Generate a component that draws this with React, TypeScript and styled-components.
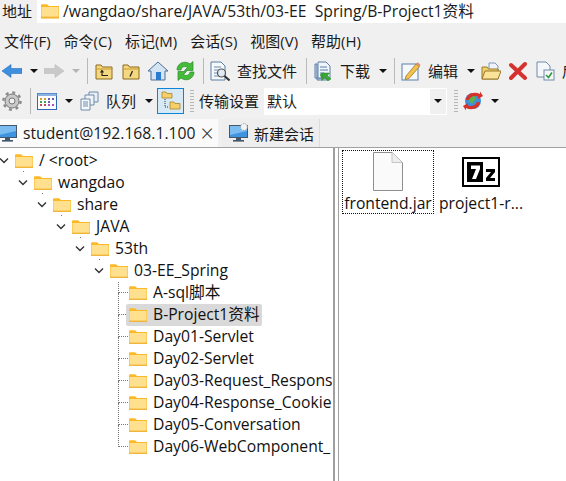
import { ReactNode } from 'react'
import styled, { createGlobalStyle } from 'styled-components'

const GlobalStyle = createGlobalStyle`
	html, body {
		margin: 0;
		padding: 0;
		background: #f0f0f0;
	}
	body {
		width: 566px;
		height: 481px;
		overflow: hidden;
		font-family: "Open Sans", "Noto Sans CJK SC", sans-serif;
		font-size: 15px;
		color: #1a1a1a;
	}
`

const Window = styled.div`
	width: 566px;
	height: 481px;
	display: flex;
	flex-direction: column;
	overflow: hidden;
	background: #f0f0f0;
`

const AddressBar = styled.div`
	height: 23px;
	flex: none;
	display: flex;
	align-items: center;
`
const AddressLabel = styled.div`
	width: 37px;
	padding: 0 0 3px 2px;
	box-sizing: border-box;
	flex: none;
`
const AddressInput = styled.div`
	flex: 1;
	height: 23px;
	background: #fff;
	display: flex;
	align-items: center;
	gap: 4px;
	padding-left: 4px;
	white-space: pre;
	font-size: 15.7px;
`
const AddressText = styled.span`
	padding-bottom: 3px;
`

const MenuBar = styled.div`
	height: 32px;
	flex: none;
	display: flex;
	align-items: center;
	gap: 13px;
	padding-left: 4px;
	margin-top: 1px;
`
const MenuItem = styled.span`
	white-space: nowrap;
`

const Toolbar = styled.div<{ $h: number }>`
	height: ${p => p.$h}px;
	flex: none;
	display: flex;
	align-items: center;
	white-space: nowrap;
`
const Slot = styled.div<{ $w: number; $ml?: number }>`
	width: ${p => p.$w}px;
	margin-left: ${p => p.$ml ?? 0}px;
	flex: none;
	display: flex;
	align-items: center;
	justify-content: center;
`
const Label = styled.span<{ $ml: number }>`
	margin-left: ${p => p.$ml}px;
	padding-bottom: 2px;
	flex: none;
`
const Separator = styled.div<{ $ml: number }>`
	width: 1px;
	height: 26px;
	margin-left: ${p => p.$ml}px;
	background: #b9b9b9;
	flex: none;
`
const Caret = styled.div<{ $ml: number; $muted?: boolean }>`
	margin-left: ${p => p.$ml}px;
	flex: none;
	width: 0;
	height: 0;
	border-left: 4px solid transparent;
	border-right: 4px solid transparent;
	border-top: 4px solid ${p => (p.$muted ? '#b5b5b5' : '#111')};
`
const Grip = styled.div<{ $ml: number }>`
	width: 4px;
	height: 22px;
	margin-left: ${p => p.$ml}px;
	flex: none;
	background: repeating-linear-gradient(to bottom, #b5b5b5 0 1px, #f0f0f0 1px 3px);
`
const ToggleButton = styled.div`
	width: 27px;
	height: 26px;
	margin-left: 4px;
	box-sizing: border-box;
	border: 1px solid #0a84d8;
	background: #d8e9f6;
	display: flex;
	align-items: center;
	justify-content: center;
	flex: none;
`
const Combo = styled.div`
	width: 183px;
	height: 27px;
	margin-left: 5px;
	flex: none;
	background: #fff;
	display: flex;
	align-items: center;
	padding-left: 3px;
	box-sizing: border-box;
`
const ComboText = styled.span`
	flex: 1;
	padding-bottom: 2px;
`
const ComboArrow = styled.div`
	width: 16px;
	height: 25px;
	background: #f0f0f0;
	display: flex;
	align-items: center;
	justify-content: center;
	margin-right: 1px;
`

const TabStrip = styled.div`
	height: 28px;
	margin-top: 3px;
	flex: none;
	display: flex;
	align-items: stretch;
	border-bottom: 1px solid #a0a0a0;
`
const Tab = styled.div<{ $active?: boolean; $w: number }>`
	width: ${p => p.$w}px;
	margin-left: ${p => (p.$active ? 0 : 4)}px;
	box-sizing: border-box;
	background: ${p => (p.$active ? '#fafafa' : '#eeeeee')};
	border-right: ${p => (p.$active ? 'none' : '1px solid #dcdcdc')};
	display: flex;
	align-items: center;
	white-space: nowrap;
	flex: none;
`
const TabTitle = styled.span<{ $ml: number; $wide?: boolean }>`
	margin-left: ${p => p.$ml}px;
	font-size: ${p => (p.$wide ? 15.7 : 15)}px;
	flex: none;
`
const TabClose = styled.span`
	margin-left: 5px;
	font-size: 23px;
	font-weight: 300;
	line-height: 1;
	color: #333;
`

const Panes = styled.div`
	flex: 1;
	display: flex;
	min-height: 0;
	background: #fff;
`
const TreePane = styled.div`
	width: 333px;
	flex: none;
	overflow: hidden;
	padding-top: 2px;
	background: #fff;
	font-size: 15.7px;
`
const Splitter = styled.div`
	width: 6px;
	flex: none;
	box-sizing: border-box;
	background: #fff;
	border-left: 2px solid #a0a0a0;
	border-right: 1px solid #a0a0a0;
`
const FilePane = styled.div`
	flex: 1;
	display: flex;
	align-items: flex-start;
	padding: 2px 0 0 3px;
	font-size: 15.7px;
`

const TreeRow = styled.div<{ $depth: number }>`
	position: relative;
	height: 22px;
	display: flex;
	align-items: center;
	padding-left: ${p => p.$depth * 19 + 15}px;
	white-space: nowrap;
	color: #111;
`
const Chevron = styled.svg<{ $depth: number }>`
	position: absolute;
	left: ${p => p.$depth * 19 - 1}px;
	top: 7px;
`
const TreeDot = styled.i<{ $depth: number }>`
	position: absolute;
	left: ${p => p.$depth * 19 + 23}px;
	bottom: 0;
	width: 1px;
	height: 1px;
	background: #777;
`
const TreeLeafLine = styled.div<{ $first?: boolean }>`
	position: absolute;
	left: 118px;
	top: ${p => (p.$first ? 0 : -11)}px;
	width: 10px;
	height: ${p => (p.$first ? 11 : 22)}px;
	box-sizing: border-box;
	border-left: 1px dotted #777;
	border-bottom: 1px dotted #777;
`
const TreeLabel = styled.div<{ $selected?: boolean }>`
	position: relative;
	display: flex;
	align-items: center;
	gap: 6px;
	height: 22px;
	padding: 0 2px 0 0;
	border-radius: 2px;
	background: ${p => (p.$selected ? '#d9d9d9' : 'transparent')};
	box-shadow: ${p => (p.$selected ? '-3px 0 0 #d9d9d9' : 'none')};
`
const TreeText = styled.span`
	padding-bottom: 3px;
`

const FileItem = styled.div<{ $focused?: boolean; $w: number; $ml?: number }>`
	width: ${p => p.$w}px;
	margin-left: ${p => p.$ml ?? 0}px;
	height: 64px;
	box-sizing: border-box;
	border: 1px dotted ${p => (p.$focused ? '#111' : 'transparent')};
	display: flex;
	flex-direction: column;
	align-items: center;
	white-space: nowrap;
	flex: none;
	color: #111;
`
const FileIconBox = styled.div`
	height: 41px;
	display: flex;
	align-items: center;
	justify-content: center;
	flex: none;
`

const FolderSvg = styled.svg`
	flex: none;
`
const Folder = ({ w = 18 }: { w?: number }) => (
	<FolderSvg width={w} height={w * 0.8} viewBox='0 0 18 14.4'>
		<path d='M0 1.2 Q0 .2 1 .2 H6 L8 2 H18 V14.4 H0 Z' fill='#fbb928' />
		<rect x='.5' y='3' width='17' height='10.4' fill='#ffe08e' />
		<rect x='0' y='12.6' width='18' height='1.6' fill='#f1b53a' />
	</FolderSvg>
)

const Ico = ({ w = 20, children }: { w?: number; children: ReactNode }) => (
	<svg width={w} height={20} viewBox={`0 0 ${w} 20`}>
		{children}
	</svg>
)

const ArrowIcon = ({ gray }: { gray?: boolean }) => (
	<Ico>
		<path
			d={gray ? 'M0 7.5 H11 V3.5 L20 10 L11 16.5 V12.5 H0 Z' : 'M20 7.5 H9 V3.5 L0 10 L9 16.5 V12.5 H20 Z'}
			fill={gray ? '#c9c9c9' : '#3f8fe0'}
			stroke={gray ? '#bdbdbd' : '#2a6fc0'}
			strokeWidth='.6'
		/>
	</Ico>
)
const FolderAction = ({ kind }: { kind: 'up' | 'slash' }) => (
	<Ico w={18}>
		<path d='M1 4 H6 L7.5 6 H17 V18 H1 Z' fill='#f4d77e' stroke='#8c6a1c' />
		<path d='M1 8 H17' stroke='#c89c30' />
		{kind === 'up' ? (
			<path d='M7 10 V14.5 H13 M5.5 11.5 L7 9.5 L8.5 11.5' fill='none' stroke='#222' strokeWidth='1.1' />
		) : (
			<path d='M10.5 10 L8 15.5' stroke='#222' strokeWidth='1.3' />
		)}
	</Ico>
)
const HomeIcon = () => (
	<Ico>
		<path d='M10 1 L20 10 H17 V19 H3 V10 H0 Z' fill='#d5e4f3' stroke='#4b6f94' />
		<rect x='8' y='11' width='5' height='8' fill='#2d7bd0' />
	</Ico>
)
const RefreshIcon = () => (
	<Ico w={19}>
		<path d='M1 9 C1 2 9 -1 14 3 L17 0.5 V9.5 H8.5 L11.5 6.5 C8.5 4.5 5.5 6 5 9 Z' fill='#45bb3a' stroke='#2b8a2a' strokeWidth='.7' />
		<path d='M18 11 C18 18 10 21 5 17 L2 19.5 V10.5 H10.5 L7.5 13.5 C10.5 15.5 13.5 14 14 11 Z' fill='#45bb3a' stroke='#2b8a2a' strokeWidth='.7' />
	</Ico>
)
const FindIcon = () => (
	<Ico>
		<path d='M1 1 H11 L15 5 V19 H1 Z' fill='#f6f9fc' stroke='#5b7fa6' />
		<path d='M4 6 H11 M4 9 H12 M4 12 H10 M4 15 H9' stroke='#6c87a8' strokeWidth='1' />
		<circle cx='11.5' cy='12' r='4' fill='#dfeaf5' stroke='#555' strokeWidth='1.2' />
		<path d='M14.5 15 L19.5 19.5' stroke='#333' strokeWidth='2' />
	</Ico>
)
const DownloadIcon = () => (
	<Ico w={18}>
		<path d='M1 3 H3 V19 H14 V17 H1 Z' fill='#c7d6e8' stroke='#5b7fa6' />
		<path d='M4 1 H12 L16 5 V17 H4 Z' fill='#f1f6fb' stroke='#5b7fa6' />
		<path d='M6 6 H13 M6 9 H14 M6 12 H10' stroke='#5b7fa6' />
		<path d='M8 19.5 L8 12 L6 14 M8 12 H15.5 L13.5 14.5 L17 18 L14 20 L10.5 16.5 L8 19.5' fill='#3ba53a' stroke='#2c8a2c' strokeWidth='.5' />
	</Ico>
)
const EditIcon = () => (
	<Ico>
		<rect x='1' y='3' width='16' height='16' fill='#f4f8fc' stroke='#5b7fa6' />
		<path d='M5 15 L15 3 L18.5 5.5 L8 17.5 L4 18.5 Z' fill='#f2c14f' stroke='#9a7a28' strokeWidth='.8' />
		<path d='M15 3 L16.5 1.2 L19.6 3.8 L18.5 5.5 Z' fill='#e88b73' />
	</Ico>
)
const OpenFolderIcon = () => (
	<Ico>
		<path d='M8 2 H14 L17 5 V11 H8 Z' fill='#eef3f9' stroke='#7f99b8' />
		<path d='M1 6 H6 L7.5 8 H17 V18 H1 Z' fill='#f1cf6b' stroke='#9a7a28' />
		<path d='M1 18 L4 10 H20 L17 18 Z' fill='#fbe39a' stroke='#9a7a28' />
	</Ico>
)
const DeleteIcon = () => (
	<Ico w={18}>
		<path d='M2 4 L16 17 M16 3 L2 17' stroke='#d5312e' strokeWidth='4' strokeLinecap='round' />
	</Ico>
)
const CheckDocIcon = () => (
	<Ico>
		<path d='M1 1 H10 L14 5 V16 H1 Z' fill='#f5f8fb' stroke='#6f8aaa' />
		<rect x='8' y='9' width='10' height='10' fill='#f7f7f7' stroke='#6f8aaa' />
		<path d='M10 14 L12.5 16.5 L16 11.5' fill='none' stroke='#2f9a3c' strokeWidth='1.6' />
	</Ico>
)
const GearIcon = () => (
	<Ico>
		<circle cx='10' cy='10' r='7' fill='#c9c9c9' stroke='#777' strokeWidth='1' />
		<circle cx='10' cy='10' r='8.6' fill='none' stroke='#8a8a8a' strokeWidth='2.4' strokeDasharray='3 3.75' />
		<circle cx='10' cy='10' r='3' fill='#f0f0f0' stroke='#777' />
	</Ico>
)
const ListViewIcon = () => (
	<Ico>
		<rect x='.5' y='2.5' width='19' height='16' fill='#fbfdff' stroke='#2f68b5' />
		<rect x='.5' y='2.5' width='19' height='2.5' fill='#8bb3e2' />
		<path d='M3 8 H5 M7 8 H9' stroke='#d2a12c' strokeWidth='2' />
		<path d='M3 11 H5 M7 11 H9' stroke='#3fa34a' strokeWidth='2' />
		<path d='M3 14 H5 M7 14 H9' stroke='#c0504d' strokeWidth='2' />
		<path d='M11 8 H13 M15 8 H17 M11 11 H13' stroke='#6b5bb5' strokeWidth='2' />
		<path d='M15 14 H17 M11 14 H13' stroke='#b04fc0' strokeWidth='2' />
	</Ico>
)
const QueueIcon = () => (
	<Ico w={19}>
		<path d='M9 1 H18 V11 H9 Z' fill='#e9eff6' stroke='#6f8aaa' />
		<path d='M5 4 H14 V14 H5 Z' fill='#eef3f8' stroke='#6f8aaa' />
		<path d='M1 8 H10 V19 H1 Z' fill='#f6f9fc' stroke='#6f8aaa' />
		<path d='M3 11 H8 M3 13 H8 M3 15 H8' stroke='#6f8aaa' />
	</Ico>
)
const SplitFoldersIcon = () => (
	<Ico>
		<path d='M1 1 H5 L6 2.5 H11 V7 H1 Z' fill='#f5cf6a' stroke='#a98427' strokeWidth='.8' />
		<path d='M4 8 V16 H8' fill='none' stroke='#333' strokeDasharray='1 1' />
		<path d='M9 11 H13 L14 12.5 H19 V18 H9 Z' fill='#f5cf6a' stroke='#a98427' strokeWidth='.8' />
	</Ico>
)
const GlobeIcon = () => (
	<Ico>
		<circle cx='10' cy='10' r='8' fill='#3f8fdc' />
		<path d='M6 5 L11 4 L13 8 L9 13 L6 10 Z M13 12 L16 11 L15 16 L12 16 Z' fill='#5cb24a' />
		<path d='M3 9 C3 3 11 0 17 3 V0.5 L20 5 L15 8 V5.5 C11 4 7 6 6 9 Z' fill='#d6322c' />
		<path d='M17 11 C17 17 9 20 3 17 V19.5 L0 15 L5 12 V14.5 C9 16 13 14 14 11 Z' fill='#d6322c' />
	</Ico>
)
const MonitorIcon = ({ badge }: { badge?: boolean }) => (
	<svg width={19} height={20} viewBox='0 0 19 20'>
		<rect x='.5' y='2.5' width='18' height='12' fill='#3f94e0' stroke='#44576b' />
		<path d='M1 3 H18 V8 L1 12 Z' fill='#7cbcf0' />
		<rect x='7' y='15' width='5' height='2' fill='#44576b' />
		<rect x='4' y='17' width='11' height='1.6' fill='#44576b' />
		{badge ? <circle cx='15' cy='4' r='3.4' fill='#f3f3f3' stroke='#8a99a8' strokeDasharray='1.4 1' /> : null}
	</svg>
)
const PlainFileIcon = () => (
	<svg width={30} height={39} viewBox='0 0 30 39'>
		<path d='M.5 .5 H19 L29.5 10.5 V38.5 H.5 Z' fill='#fafafa' stroke='#8e8e8e' />
		<path d='M19 .5 V10.5 H29.5' fill='#eee' stroke='#c4c4c4' />
	</svg>
)
const SevenZipIcon = () => (
	<svg width={38} height={30} viewBox='0 0 38 30'>
		<rect x='0' y='0' width='38' height='30' fill='#000' />
		<rect x='2' y='2' width='34' height='26' fill='#fff' />
		<rect x='5' y='5' width='16' height='20' fill='#000' />
		<path d='M9 8.5 H18 V12 L14 22 H10 L14 12 H9 Z' fill='#fff' />
		<path d='M24 12 H33 V15 L28 21 H33 V24 H24 V21 L29 15 H24 Z' fill='#000' />
	</svg>
)

const ExpandChevron = ({ depth }: { depth: number }) => (
	<Chevron $depth={depth} width={10} height={8} viewBox='0 0 10 8'>
		<path d='M1 1.5 L5 5.5 L9 1.5' fill='none' stroke='#333' strokeWidth='1.4' />
	</Chevron>
)

const expanded = ['/ <root>', 'wangdao', 'share', 'JAVA', '53th', '03-EE_Spring']
const leaves = [
	'A-sql脚本',
	'B-Project1资料',
	'Day01-Servlet',
	'Day02-Servlet',
	'Day03-Request_Response',
	'Day04-Response_Cookie',
	'Day05-Conversation',
	'Day06-WebComponent_',
]

const App = () => (
	<Window>
		<GlobalStyle />
		<AddressBar>
			<AddressLabel>地址</AddressLabel>
			<AddressInput>
				<Folder w={18} />
				<AddressText>/wangdao/share/JAVA/53th/03-EE  Spring/B-Project1资料</AddressText>
			</AddressInput>
		</AddressBar>

		<MenuBar>
			{['文件(F)', '命令(C)', '标记(M)', '会话(S)', '视图(V)', '帮助(H)'].map(m => (
				<MenuItem key={m}>{m}</MenuItem>
			))}
		</MenuBar>

		<Toolbar $h={30}>
			<Slot $w={20} $ml={2}><ArrowIcon /></Slot>
			<Caret $ml={8} />
			<Slot $w={20} $ml={6}><ArrowIcon gray /></Slot>
			<Caret $ml={8} $muted />
			<Separator $ml={7} />
			<Slot $w={18} $ml={7}><FolderAction kind='up' /></Slot>
			<Slot $w={18} $ml={9}><FolderAction kind='slash' /></Slot>
			<Slot $w={20} $ml={8}><HomeIcon /></Slot>
			<Slot $w={19} $ml={8}><RefreshIcon /></Slot>
			<Separator $ml={8} />
			<Slot $w={20} $ml={6}><FindIcon /></Slot>
			<Label $ml={7}>查找文件</Label>
			<Separator $ml={9} />
			<Slot $w={18} $ml={7}><DownloadIcon /></Slot>
			<Label $ml={8}>下载</Label>
			<Caret $ml={9} />
			<Separator $ml={7} />
			<Slot $w={20} $ml={6}><EditIcon /></Slot>
			<Label $ml={7}>编辑</Label>
			<Caret $ml={9} />
			<Slot $w={20} $ml={6}><OpenFolderIcon /></Slot>
			<Slot $w={18} $ml={8}><DeleteIcon /></Slot>
			<Slot $w={20} $ml={9}><CheckDocIcon /></Slot>
			<Label $ml={6}>后</Label>
		</Toolbar>

		<Toolbar $h={30}>
			<Slot $w={20} $ml={2}><GearIcon /></Slot>
			<Separator $ml={8} />
			<Slot $w={20} $ml={6}><ListViewIcon /></Slot>
			<Caret $ml={8} />
			<Slot $w={19} $ml={7}><QueueIcon /></Slot>
			<Label $ml={7}>队列</Label>
			<Caret $ml={9} />
			<ToggleButton><SplitFoldersIcon /></ToggleButton>
			<Grip $ml={6} />
			<Label $ml={5}>传输设置</Label>
			<Combo>
				<ComboText>默认</ComboText>
				<ComboArrow><Caret $ml={0} /></ComboArrow>
			</Combo>
			<Grip $ml={7} />
			<Slot $w={20} $ml={5}><GlobeIcon /></Slot>
			<Caret $ml={8} />
		</Toolbar>

		<TabStrip>
			<Tab $active $w={218}>
				<Slot $w={19} $ml={-2}><MonitorIcon /></Slot>
				<TabTitle $ml={6} $wide>student@192.168.1.100</TabTitle>
				<TabClose>×</TabClose>
			</Tab>
			<Tab $w={98}>
				<Slot $w={19} $ml={7}><MonitorIcon badge /></Slot>
				<TabTitle $ml={6}>新建会话</TabTitle>
			</Tab>
		</TabStrip>

		<Panes>
			<TreePane>
				{expanded.map((name, i) => (
					<TreeRow key={name} $depth={i}>
						<ExpandChevron depth={i} />
						<TreeLabel>
							<Folder />
							<TreeText>{name}</TreeText>
						</TreeLabel>
						{i < expanded.length - 1 ? <TreeDot $depth={i} /> : null}
					</TreeRow>
				))}
				{leaves.map((name, i) => (
					<TreeRow key={name} $depth={6}>
						<TreeLeafLine $first={i === 0} />
						<TreeLabel $selected={name.startsWith('B-')}>
							<Folder />
							<TreeText>{name}</TreeText>
						</TreeLabel>
					</TreeRow>
				))}
			</TreePane>
			<Splitter />
			<FilePane>
				<FileItem $focused $w={92}>
					<FileIconBox><PlainFileIcon /></FileIconBox>
					frontend.jar
				</FileItem>
				<FileItem $w={92} $ml={1}>
					<FileIconBox><SevenZipIcon /></FileIconBox>
					project1-r...
				</FileItem>
			</FilePane>
		</Panes>
	</Window>
)

export default App
